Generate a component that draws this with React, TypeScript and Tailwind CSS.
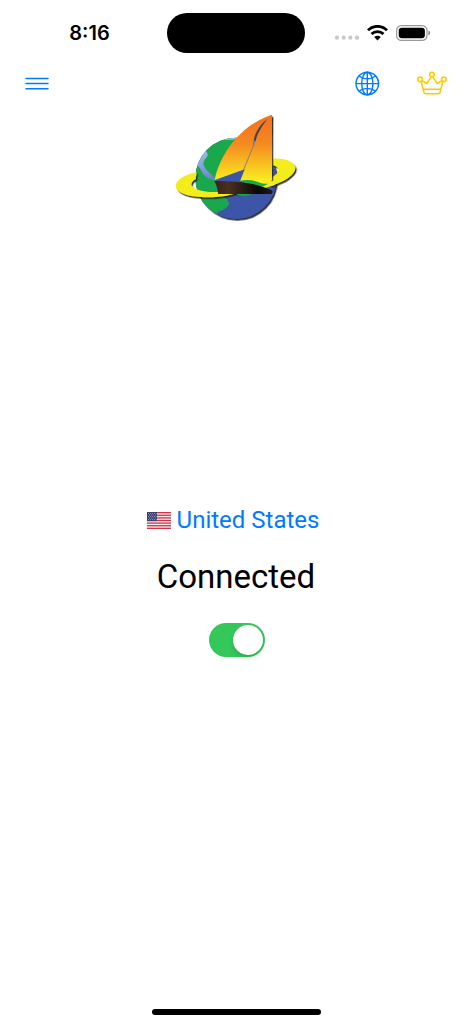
import { useState } from "react";

function StatusBar() {
  return (
    <div className="flex items-center pt-[13px]">
      <div className="flex flex-1 justify-center pl-3">
        <span className="text-xl font-semibold leading-6">8:16</span>
      </div>
      <div className="h-10 w-[138px] rounded-full bg-black" />
      <div className="flex flex-1 items-center justify-center gap-2 pr-3">
        <svg className="h-4 w-6" viewBox="0 0 24 16" fill="#c9c9cc">
          <circle cx="2" cy="12.7" r="2.1" />
          <circle cx="8.7" cy="12.7" r="2.1" />
          <circle cx="15.3" cy="12.7" r="2.1" />
          <circle cx="22" cy="12.7" r="2.1" />
        </svg>
        <svg className="h-4 w-[21px]" viewBox="0 0 21 16" fill="none" stroke="#000" strokeWidth="2.8">
          <path d="M1 5.2C6.3 0 14.7 0 20 5.2" />
          <path d="M4.5 9C7.8 5.7 13.2 5.7 16.5 9" />
          <path d="M10.5 15.4L7.2 12.1Q10.5 9.2 13.8 12.1Z" fill="#000" stroke="none" />
        </svg>
        <svg className="h-4 w-[35px]" viewBox="0 0 35 16">
          <rect x=".6" y=".6" width="30.4" height="14.8" rx="4.8" fill="none" stroke="#999" strokeWidth="1.2" />
          <rect x="2.7" y="2.7" width="26.2" height="10.6" rx="3.2" fill="#000" />
          <path d="M32.4 5.6Q34.2 6.2 34.2 8T32.4 10.4Z" fill="#888" />
        </svg>
      </div>
    </div>
  );
}

function NavBar() {
  return (
    <header className="flex items-center justify-between px-[25px] pt-[18px]">
      <button type="button" aria-label="Menu" className="text-[#007aff]">
        <svg className="h-6 w-6" viewBox="0 0 24 24" fill="none" stroke="currentColor" strokeWidth="1.5" strokeLinecap="round">
          <path d="M1 6.4h22M1 11.6h22M1 16.8h22" />
        </svg>
      </button>
      <div className="flex items-center gap-[37px]">
        <button type="button" aria-label="Choose server" className="text-[#007aff]">
          <svg className="h-[26px] w-[26px]" viewBox="0 0 26 26" fill="none" stroke="currentColor" strokeWidth="1.4">
            <circle cx="13.3" cy="12.6" r="11.3" />
            <ellipse cx="13.3" cy="12.6" rx="5.6" ry="11.3" />
            <path d="M13.3 1.3v22.6M2 12.6h22.6M4.8 5Q13.3 10.6 21.8 5M4.8 20.2Q13.3 14.6 21.8 20.2" />
          </svg>
        </button>
        <button type="button" aria-label="Premium" className="text-[#ffcc00]">
          <svg className="h-[26px] w-[30px]" viewBox="0 0 30 26" fill="none" stroke="currentColor" strokeWidth="1.6" strokeLinejoin="round">
            <circle cx="15" cy="3.6" r="2.3" />
            <circle cx="3.2" cy="8.3" r="2.3" />
            <circle cx="26.8" cy="8.3" r="2.3" />
            <path d="M4.2 10.6L7 21.6Q7.3 22.8 8.5 22.8H21.5Q22.7 22.8 23 21.6L25.8 10.6M5.2 9.8L9.8 12.5L14 5.8M16 5.8L20.2 12.5L24.8 9.8M6.2 18.3H23.8" />
          </svg>
        </button>
      </div>
    </header>
  );
}

function Logo() {
  return (
    <svg className="h-[124px] w-[140px]" viewBox="0 0 420 372" role="img" aria-label="Sailing boat on a globe">
      <defs>
        <linearGradient id="sail" gradientUnits="userSpaceOnUse" x1="250" y1="50" x2="250" y2="230">
          <stop offset="0" stopColor="#f37321" />
          <stop offset=".4" stopColor="#f68b1f" />
          <stop offset="1" stopColor="#f9ed20" />
        </linearGradient>
        <linearGradient id="hull" x1="0" x2="1" y1="0" y2="0">
          <stop offset="0" stopColor="#3a2117" />
          <stop offset=".25" stopColor="#49301f" />
          <stop offset=".75" stopColor="#0b0705" />
          <stop offset="1" stopColor="#211a18" />
        </linearGradient>
        <linearGradient id="river" gradientUnits="userSpaceOnUse" x1="100" y1="130" x2="140" y2="225">
          <stop offset="0" stopColor="#a5c6ed" />
          <stop offset="1" stopColor="#6683c6" />
        </linearGradient>
        <clipPath id="globe">
          <circle cx="210" cy="223" r="122" />
        </clipPath>
        <filter id="shade" x="-10%" y="-10%" width="120%" height="120%">
          <feDropShadow dx="4" dy="5" stdDeviation="1.5" floodColor="#222" floodOpacity=".95" />
        </filter>
      </defs>
      <g filter="url(#shade)">
        <circle cx="210" cy="223" r="122" fill="#3c55a6" />
      </g>
      <g clipPath="url(#globe)">
        <path d="M80 90H230V200L160 235L162 272C186 280 196 298 182 310C172 322 160 317 153 329L80 340Z" fill="#1aa84c" />
        <path d="M170 108Q190 98 214 101L202 107Z" fill="#9dbcea" />
        <path d="M88 150L110 138L122 143Q128 154 122 160Q108 172 114 186Q120 200 133 208L146 221V229Q128 226 118 217Q110 210 107 202Q101 187 84 178Z" fill="url(#river)" />
        <path d="M310 160L322 168L326 194H310Z" fill="#1aa84c" />
      </g>
      <g filter="url(#shade)">
        <path
          d="M92 205C55 212 29 228 29 247C33 273 87 283 150 279Q182 277 212 268L300 252C360 232 390 211 388 190C384 171 352 161 317 164V184Q337 186 338 198C336 210 318 222 290 234L156 264C112 266 75 254 76 241Q77 232 89 226Z"
          fill="#f3ed1c"
        />
      </g>
      <path d="M146 229L234 196L247 225L290 233L310 240L322 256L325 274H215V266H156Z" fill="#3c55a6" />
      <path d="M203 266H264Q250 276 232 275Q214 274 203 266Z" fill="#1aa84c" />
      <path d="M290 231L335 215L325 243L298 252L278 246Z" fill="#f3ed1c" />
      <g filter="url(#shade)">
        <path d="M265 66L318 32L317 226L260 222Z" fill="url(#sail)" />
      </g>
      <path d="M317 220L316 236Q302 238 285 247Q255 232 223 231L240 195H300Z" fill="#f3ed1c" />
      <path d="M146 228C164 145 224 64 318 32V228Q295 236 275 235L223 230L236 196L146 228Z" fill="url(#sail)" />
      <path d="M303 46C290 66 276 82 269 110L263 120C261 100 275 68 303 46Z" fill="#464448" />
      <path d="M265 118L233 197" stroke="#8c8074" strokeWidth="3" />
      <path d="M267 110L262 126" stroke="#6d83bd" strokeWidth="4" />
      <path d="M218 231Q250 223 278 235Q291 241 307 239L288 249L250 240Z" fill="#1aa84c" />
      <path d="M144 231C210 231 275 237 320 260L318 270H156C157 255 152 242 144 231Z" fill="url(#hull)" />
    </svg>
  );
}

const STRIPES = [0, 2, 4, 6, 8, 10, 12];

function UsFlag() {
  return (
    <svg className="h-[17px] w-6" viewBox="0 0 48 34" aria-hidden="true">
      <rect width="48" height="34" fill="#f7eeee" />
      {STRIPES.map((row) => (
        <rect key={row} y={row * 2.615} width="48" height="2.615" fill="#d0334a" />
      ))}
      <rect width="20" height="18.3" fill="#3c4273" />
      <g stroke="#c2c4d4" strokeWidth="1.5" strokeDasharray="1.5 2.5">
        <path d="M2 3H19M4 6H19M2 9H19M4 12H19M2 15H19" />
      </g>
    </svg>
  );
}

export default function App() {
  const [connected, setConnected] = useState(true);

  return (
    <div className="flex min-h-screen flex-col bg-white font-['Inter',sans-serif] text-black">
      <StatusBar />
      <NavBar />
      <main className="flex flex-1 flex-col items-center pt-[7px]">
        <Logo />
        <button type="button" className="mt-[276px] mr-1.5 flex items-center gap-1.5 font-['Roboto',sans-serif] text-2xl leading-8 text-[#007aff]">
          <UsFlag />
          United States
        </button>
        <label htmlFor="vpn" className="mt-[21px] font-['Roboto',sans-serif] text-[33px] leading-10">
          {connected ? "Connected" : "Disconnected"}
        </label>
        <input
          id="vpn"
          type="checkbox"
          role="switch"
          checked={connected}
          onChange={(e) => setConnected(e.target.checked)}
          className="mt-[26px] ml-0.5 flex h-[34px] w-14 appearance-none items-center rounded-full bg-[#e9e9ea] px-0.5 before:h-[30px] before:w-[30px] before:rounded-full before:bg-white before:shadow-md checked:justify-end checked:bg-[#34c759]"
        />
      </main>
      <footer className="flex justify-center pb-[9px]">
        <div className="h-1.5 w-[169px] rounded-full bg-black" />
      </footer>
    </div>
  );
}
